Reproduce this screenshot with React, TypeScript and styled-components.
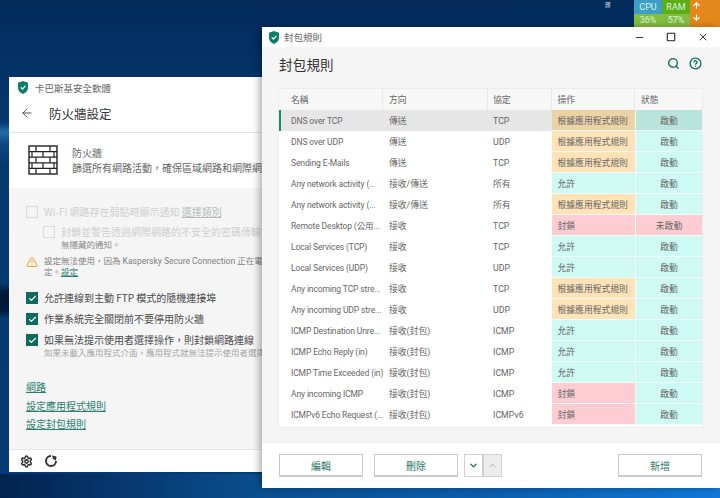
import React from 'react'
import styled, { createGlobalStyle } from 'styled-components'
import { ArrowDown, ArrowUp, ArrowLeft, ChevronDown, ChevronUp, CircleHelp, Search, Settings, Minus, Square, X, Check, TriangleAlert } from 'lucide-react'

const Global = createGlobalStyle`
  * {
    margin: 0;
    padding: 0;
    box-sizing: border-box;
  }
  html, body {
    width: 720px;
    height: 498px;
    overflow: hidden;
  }
  body {
    font-family: "Noto Sans CJK TC", "Noto Sans", sans-serif;
  }
`

const FONT = `Roboto, "Noto Sans CJK TC", sans-serif`

const Desktop = styled.div`
  position: relative;
  width: 720px;
  height: 498px;
  overflow: hidden;
  background:
    linear-gradient(90deg, #03234f 0, #0a4f90 260px, #0b5fae 500px, #1078d8 720px) bottom / 100% 24px no-repeat,
    linear-gradient(180deg, transparent 122px, rgba(50, 130, 200, 0.7) 132px, rgba(20, 90, 160, 0.4) 145px, transparent 165px) left / 262px 100% no-repeat,
    linear-gradient(180deg, transparent 284px, rgba(0, 15, 40, 0.75) 292px, rgba(0, 15, 40, 0.75) 310px, transparent 318px) left / 262px 100% no-repeat,
    linear-gradient(180deg, #032b5c 0, #04386f 120px, #053a74 498px);
`

const Tray = styled.div`
  position: absolute;
  top: 0;
  left: 634px;
  width: 86px;
  height: 27px;
  display: grid;
  grid-template-columns: 28px 28px 30px;
  font-family: ${FONT};
  font-size: 9px;
  line-height: 13px;
  text-align: center;
  color: #dff2e0;
`

const Meter = styled.div`
  display: flex;
  flex-direction: column;
  background: #84bd3f;
`

const MeterTop = styled.span<{ $bg: string }>`
  height: 14px;
  background: ${p => p.$bg};
  padding-top: 1px;
`

const MeterBottom = styled.span`
  height: 13px;
`

const Arrows = styled.div`
  display: flex;
  flex-direction: column;
  align-items: flex-start;
  padding: 1px 0 0 2px;
  gap: 3px;
  background: #e5881c;
  color: #fff;
`

const TrayMark = styled.span`
  position: absolute;
  top: 1px;
  left: 605px;
  font-size: 6px;
  line-height: 7px;
  color: #cdd6e0;
`

const Window = styled.section<{ $x: number; $y: number; $w: number; $h: number }>`
  position: absolute;
  left: ${p => p.$x}px;
  top: ${p => p.$y}px;
  width: ${p => p.$w}px;
  height: ${p => p.$h}px;
  display: flex;
  flex-direction: column;
  background: #fff;
  overflow: hidden;
  color: #4a4a4a;
`

const FrontWindow = styled(Window)`
  box-shadow: -3px 0 7px rgba(0, 0, 0, 0.3);
`

const TitleBar = styled.header`
  height: 20px;
  flex: none;
  display: flex;
  align-items: center;
  font-size: 9.5px;
  color: #666;
`

const BackTitleBar = styled(TitleBar)`
  height: 21px;
  padding: 0 0 0 9px;
  gap: 7px;
`

const FrontTitleBar = styled(TitleBar)`
  padding: 0 1px 0 7px;
  gap: 5px;
`

const WindowButtons = styled.div`
  margin-left: auto;
  display: flex;
  align-items: center;
  color: #222;
`

const WindowButton = styled.span`
  width: 32px;
  display: flex;
  justify-content: center;
`

const BackHeader = styled.div`
  height: 35px;
  flex: none;
  display: flex;
  align-items: center;
  padding: 0 0 4px 11px;
  border-bottom: 1px solid #e3e3e3;
  color: #444;
`

const BackTitle = styled.h1`
  margin-left: 15px;
  font-size: 12.5px;
  font-weight: 400;
  color: #333;
  white-space: nowrap;
`

const Intro = styled.div`
  height: 55px;
  flex: none;
  display: flex;
  align-items: center;
  padding: 0 0 1px 19px;
  gap: 14px;
  white-space: nowrap;
  font-size: 10px;
  line-height: 15px;
  color: #666;
`

const SettingsPane = styled.div`
  flex: 1;
  padding: 18px 0 0 17px;
  background: #f5f5f5;
  white-space: nowrap;
  font-size: 10px;
  overflow: hidden;
`

const CheckRow = styled.div<{ $indent?: number; $gap?: number }>`
  display: flex;
  align-items: flex-start;
  gap: 6px;
  margin-left: ${p => p.$indent ?? 0}px;
  margin-bottom: ${p => p.$gap ?? 0}px;
  line-height: 12px;
`

const Box = styled.span<{ $on?: boolean }>`
  width: 12px;
  height: 12px;
  flex: none;
  display: flex;
  align-items: center;
  justify-content: center;
  color: #fff;
  background: ${p => (p.$on ? '#0d6b5b' : 'transparent')};
  border: 1px solid ${p => (p.$on ? '#0d6b5b' : '#dcdcdc')};
`

const Muted = styled.span`
  color: #cfcfcf;
`

const MutedLink = styled.span`
  color: #b4bdbb;
  text-decoration: underline;
`

const SmallNote = styled.div<{ $light?: boolean }>`
  font-size: 8.5px;
  line-height: 13px;
  color: ${p => (p.$light ? '#a5a5a5' : '#888')};
`

const Warning = styled.div`
  display: flex;
  gap: 6px;
  margin: 5px 0 14px 0;
  font-family: ${FONT};
  font-size: 8.5px;
  line-height: 11px;
  color: #808080;
`

const GreenLink = styled.a`
  color: #2a7f70;
  text-decoration: underline;
`

const Links = styled.div`
  display: flex;
  flex-direction: column;
  gap: 6.5px;
  margin-top: 22px;
  font-size: 10px;
  line-height: 12px;
`

const BackFooter = styled.footer`
  height: 23px;
  flex: none;
  display: flex;
  align-items: center;
  gap: 12px;
  padding-left: 11px;
  border-top: 1px solid #e6e6e6;
  color: #333;
`

const FrontBody = styled.div`
  flex: 1;
  display: flex;
  flex-direction: column;
  padding: 0 18px 15px 17px;
  background: #f5f5f5;
`

const PageHead = styled.div`
  height: 42px;
  flex: none;
  display: flex;
  align-items: center;
  padding-bottom: 9px;
`

const PageTitle = styled.h1`
  font-size: 13.5px;
  font-weight: 400;
  color: #333;
  letter-spacing: 0.2px;
`

const HeadIcons = styled.div`
  margin-left: auto;
  display: flex;
  gap: 9px;
  color: #0d6b5b;
`

const Table = styled.div`
  flex: 1;
  display: flex;
  flex-direction: column;
  background: #fff;
  box-shadow: 0 0 0 1px #ececec;
  font-family: ${FONT};
  font-size: 8.8px;
  line-height: 12px;
  color: #666;
`

const Row = styled.div<{ $selected?: boolean }>`
  position: relative;
  height: 21px;
  flex: none;
  display: grid;
  grid-template-columns: 104px 105px 63.5px 83.5px 67px;
  background: ${p => (p.$selected ? '#e6e6e6' : 'transparent')};
  ${p =>
    p.$selected &&
    `&::before {
      content: '';
      position: absolute;
      left: 0;
      top: 0;
      bottom: 0;
      width: 2px;
      background: #14906f;
    }`}
`

const HeadRow = styled(Row)`
  background: #f7f7f7;
`

const Cell = styled.div<{ $left?: number }>`
  display: flex;
  align-items: center;
  padding-left: ${p => p.$left ?? 0}px;
  white-space: nowrap;
  overflow: hidden;
`

const HeadCell = styled(Cell)`
  border-right: 1px solid #e8e8e8;
`

const BodyCell = styled(Cell)`
  padding-top: 1px;
`

const NameCell = styled(BodyCell)`
  padding-left: 12px;
  font-size: 8.5px;
  letter-spacing: -0.12px;
`

const actionBg = {
  app: '#fde3b7',
  allow: '#cffaf4',
  block: '#fdcdd3'
}

const ActionCell = styled(BodyCell)<{ $kind: keyof typeof actionBg; $selected?: boolean }>`
  padding-left: 6px;
  background: ${p => (p.$selected ? '#ecd3a6' : actionBg[p.$kind])};
  border-bottom: 1px solid #f2fbf9;
`

const StateCell = styled(BodyCell)<{ $off?: boolean; $selected?: boolean }>`
  justify-content: center;
  background: ${p => (p.$selected ? '#b9e4dc' : p.$off ? actionBg.block : actionBg.allow)};
  border-left: 1px solid #f2fbf9;
  border-bottom: 1px solid #f2fbf9;
`

const FrontFooter = styled.footer`
  height: 46px;
  flex: none;
  display: flex;
  align-items: flex-start;
  padding: 11px 18px 0 17px;
  border-top: 1px solid #ececec;
`

const Button = styled.button`
  width: 84px;
  height: 23px;
  background: #fff;
  border: 1px solid #c9c9c9;
  border-bottom-width: 2px;
  font-family: inherit;
  font-size: 10px;
  color: #2a7565;
`

const DeleteButton = styled(Button)`
  margin-left: 11px;
`

const AddButton = styled(Button)`
  margin-left: auto;
`

const MoveButton = styled.button<{ $disabled?: boolean }>`
  width: 19px;
  height: 23px;
  display: flex;
  align-items: center;
  justify-content: center;
  background: ${p => (p.$disabled ? '#ededed' : '#fff')};
  border: 1px solid #d0d0d0;
  color: ${p => (p.$disabled ? '#a9a9a9' : '#1d5e50')};
`

const MoveGroup = styled.div`
  display: flex;
  margin-left: 6px;
`

const Shield = () => (
  <svg width="10" height="13" viewBox="0 0 10 13" style={{ flex: 'none' }}>
    <path d="M5 0 L10 1.8 V7 C10 10 7.5 11.8 5 13 C2.5 11.8 0 10 0 7 V1.8 Z" fill="#0f7d68" />
    <path d="M2.8 6.4 L4.5 8.1 L7.4 4.8" fill="none" stroke="#fff" strokeWidth="1.2" />
  </svg>
)

const Wall = () => (
  <svg width="30" height="30" viewBox="0 0 30 30" style={{ flex: 'none' }} fill="none" stroke="#222" strokeWidth="1.4">
    <rect x="1" y="1" width="28" height="28" />
    <path d="M1 6.6H29M1 12.2H29M1 17.8H29M1 23.4H29" strokeWidth="1.2" />
    <path d="M8 1V6.6M22 1V6.6M15 6.6V12.2M4 6.6V12.2M26 6.6V12.2M8 12.2V17.8M22 12.2V17.8M15 17.8V23.4M4 17.8V23.4M26 17.8V23.4M8 23.4V29M22 23.4V29" strokeWidth="1.2" />
  </svg>
)

const Kiwi = () => (
  <svg width="12" height="12" viewBox="0 0 12 12">
    <path d="M6 1 A5 5 0 1 0 11 6" fill="none" stroke="#333" strokeWidth="2" />
    <path d="M7 0.5 L11.5 1.5 L11 5.5 L8 4 Z" fill="#333" />
  </svg>
)

type Rule = [string, string, string, 'app' | 'allow' | 'block', boolean?]

const ACTION_TEXT = { app: '根據應用程式規則', allow: '允許', block: '封鎖' }

const RULES: Rule[] = [
  ['DNS over TCP', '傳送', 'TCP', 'app'],
  ['DNS over UDP', '傳送', 'UDP', 'app'],
  ['Sending E-Mails', '傳送', 'TCP', 'app'],
  ['Any network activity (...', '接收/傳送', '所有', 'allow'],
  ['Any network activity (...', '接收/傳送', '所有', 'app'],
  ['Remote Desktop (公用...', '接收', 'TCP', 'block', true],
  ['Local Services (TCP)', '接收', 'TCP', 'allow'],
  ['Local Services (UDP)', '接收', 'UDP', 'allow'],
  ['Any incoming TCP stre...', '接收', 'TCP', 'app'],
  ['Any incoming UDP stre...', '接收', 'UDP', 'app'],
  ['ICMP Destination Unre...', '接收(封包)', 'ICMP', 'allow'],
  ['ICMP Echo Reply (in)', '接收(封包)', 'ICMP', 'allow'],
  ['ICMP Time Exceeded (in)', '接收(封包)', 'ICMP', 'allow'],
  ['Any incoming ICMP', '接收(封包)', 'ICMP', 'block'],
  ['ICMPv6 Echo Request (...', '接收(封包)', 'ICMPv6', 'block']
]

export default function App() {
  return (
    <Desktop>
      <Global />
      <TrayMark>匯</TrayMark>
      <Tray>
        <Meter>
          <MeterTop $bg="#3c9fc9">CPU</MeterTop>
          <MeterBottom>36%</MeterBottom>
        </Meter>
        <Meter>
          <MeterTop $bg="#5cae16">RAM</MeterTop>
          <MeterBottom>57%</MeterBottom>
        </Meter>
        <Arrows>
          <ArrowUp size={9} strokeWidth={3} />
          <ArrowDown size={9} strokeWidth={3} />
        </Arrows>
      </Tray>

      <Window $x={9} $y={77} $w={262} $h={395}>
        <BackTitleBar>
          <Shield />
          <span>卡巴斯基安全軟體</span>
        </BackTitleBar>
        <BackHeader>
          <ArrowLeft size={14} strokeWidth={1.6} />
          <BackTitle>防火牆設定</BackTitle>
        </BackHeader>
        <Intro>
          <Wall />
          <div>
            <div>防火牆</div>
            <div>篩選所有網路活動，確保區域網路和網際網路</div>
          </div>
        </Intro>
        <SettingsPane>
          <CheckRow $gap={8}>
            <Box />
            <span>
              <Muted>Wi-Fi 網路存在弱點時顯示通知 </Muted>
              <MutedLink>選擇類別</MutedLink>
            </span>
          </CheckRow>
          <CheckRow $indent={17}>
            <Box />
            <div>
              <Muted>封鎖並警告透過網際網路的不安全的密碼傳輸</Muted>
              <SmallNote>無隱藏的通知。</SmallNote>
            </div>
          </CheckRow>
          <Warning>
            <TriangleAlert size={12} color="#e8a317" strokeWidth={2} style={{ flex: 'none' }} />
            <span>
              設定無法使用，因為 Kaspersky Secure Connection 正在電腦
              <br />
              定。<GreenLink>設定</GreenLink>
            </span>
          </Warning>
          <CheckRow $gap={9}>
            <Box $on>
              <Check size={9} strokeWidth={3} />
            </Box>
            <span>允許連線到主動 FTP 模式的隨機連接埠</span>
          </CheckRow>
          <CheckRow $gap={9}>
            <Box $on>
              <Check size={9} strokeWidth={3} />
            </Box>
            <span>作業系統完全關閉前不要停用防火牆</span>
          </CheckRow>
          <CheckRow>
            <Box $on>
              <Check size={9} strokeWidth={3} />
            </Box>
            <div>
              <div>如果無法提示使用者選擇操作，則封鎖網路連線</div>
              <SmallNote $light>如果未載入應用程式介面，應用程式就無法提示使用者選擇</SmallNote>
            </div>
          </CheckRow>
          <Links>
            <GreenLink>網路</GreenLink>
            <GreenLink>設定應用程式規則</GreenLink>
            <GreenLink>設定封包規則</GreenLink>
          </Links>
        </SettingsPane>
        <BackFooter>
          <Settings size={13} strokeWidth={2.8} />
          <Kiwi />
        </BackFooter>
      </Window>

      <FrontWindow $x={262} $y={27} $w={458} $h={461}>
        <FrontTitleBar>
          <Shield />
          <span>封包規則</span>
          <WindowButtons>
            <WindowButton>
              <Minus size={11} strokeWidth={2} />
            </WindowButton>
            <WindowButton>
              <Square size={10} strokeWidth={2.6} />
            </WindowButton>
            <WindowButton>
              <X size={12} strokeWidth={1.8} />
            </WindowButton>
          </WindowButtons>
        </FrontTitleBar>
        <FrontBody>
          <PageHead>
            <PageTitle>封包規則</PageTitle>
            <HeadIcons>
              <Search size={13} strokeWidth={2.6} />
              <CircleHelp size={13} strokeWidth={2.4} />
            </HeadIcons>
          </PageHead>
          <Table>
            <HeadRow>
              <HeadCell $left={12}>名稱</HeadCell>
              <HeadCell $left={6}>方向</HeadCell>
              <HeadCell $left={5}>協定</HeadCell>
              <HeadCell $left={6}>操作</HeadCell>
              <Cell $left={6}>狀態</Cell>
            </HeadRow>
            {RULES.map(([name, dir, proto, action, off], i) => (
              <Row key={i} $selected={i === 0}>
                <NameCell>{name}</NameCell>
                <BodyCell $left={6}>{dir}</BodyCell>
                <BodyCell $left={5}>{proto}</BodyCell>
                <ActionCell $kind={action} $selected={i === 0}>
                  {ACTION_TEXT[action]}
                </ActionCell>
                <StateCell $off={off} $selected={i === 0}>
                  {off ? '未啟動' : '啟動'}
                </StateCell>
              </Row>
            ))}
          </Table>
        </FrontBody>
        <FrontFooter>
          <Button>編輯</Button>
          <DeleteButton>刪除</DeleteButton>
          <MoveGroup>
            <MoveButton>
              <ChevronDown size={11} strokeWidth={2.6} />
            </MoveButton>
            <MoveButton $disabled>
              <ChevronUp size={11} strokeWidth={2} />
            </MoveButton>
          </MoveGroup>
          <AddButton>新增</AddButton>
        </FrontFooter>
      </FrontWindow>
    </Desktop>
  )
}
